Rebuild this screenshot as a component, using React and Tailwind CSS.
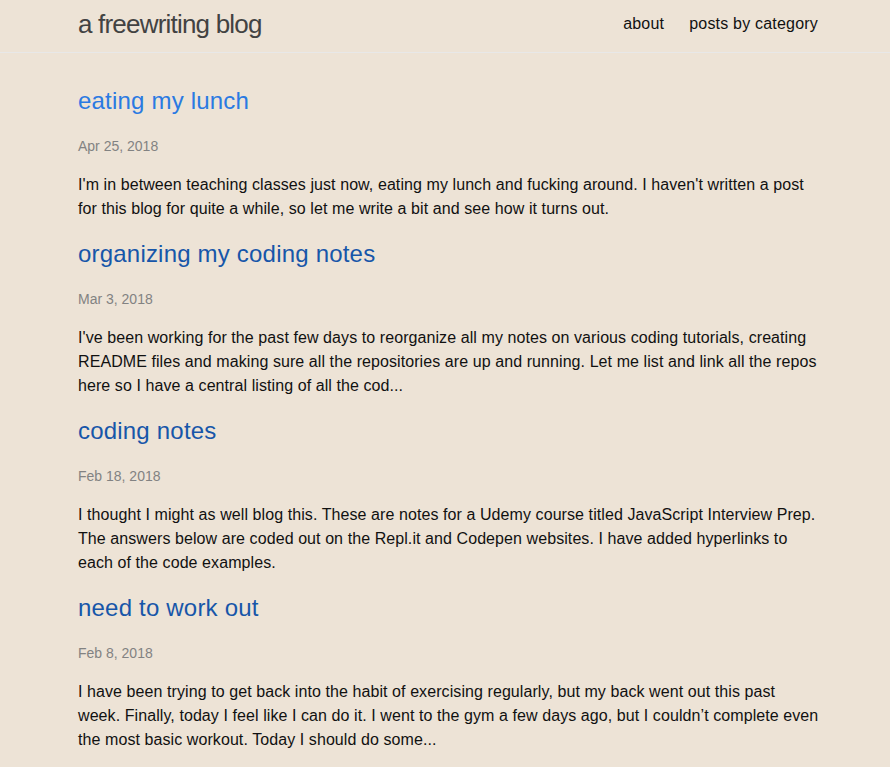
const posts = [
  {
    title: 'eating my lunch',
    date: 'Apr 25, 2018',
    lines: [
      "I'm in between teaching classes just now, eating my lunch and fucking around. I haven't written a post",
      'for this blog for quite a while, so let me write a bit and see how it turns out.',
    ],
    fresh: true,
  },
  {
    title: 'organizing my coding notes',
    date: 'Mar 3, 2018',
    lines: [
      "I've been working for the past few days to reorganize all my notes on various coding tutorials, creating",
      'README files and making sure all the repositories are up and running. Let me list and link all the repos',
      'here so I have a central listing of all the cod...',
    ],
  },
  {
    title: 'coding notes',
    date: 'Feb 18, 2018',
    lines: [
      'I thought I might as well blog this. These are notes for a Udemy course titled JavaScript Interview Prep.',
      'The answers below are coded out on the Repl.it and Codepen websites. I have added hyperlinks to',
      'each of the code examples.',
    ],
  },
  {
    title: 'need to work out',
    date: 'Feb 8, 2018',
    lines: [
      'I have been trying to get back into the habit of exercising regularly, but my back went out this past',
      'week. Finally, today I feel like I can do it. I went to the gym a few days ago, but I couldn’t complete even',
      'the most basic workout. Today I should do some...',
    ],
  },
];

export default function App() {
  return (
    <div className="min-h-screen bg-[#ede3d6] text-[#111] font-['Liberation_Sans',Arial,sans-serif]">
      <header className="border-b border-[#e8e8e8]">
        <div className="ml-[78px] w-[740px] h-[52px] flex items-start justify-between">
          <a href="#" className="text-[26px] leading-[49px] text-[#424242] tracking-[-0.8px]">
            a freewriting blog
          </a>
          <nav className="flex gap-[25px] text-[16px] leading-[48px] tracking-[0.2px]">
            <a href="#">about</a>
            <a href="#">posts by category</a>
          </nav>
        </div>
      </header>

      <main className="ml-[78px] w-[740px] pt-[33px]">
        {posts.map((p) => (
          <article key={p.title} className="mb-[18px]">
            <h2 className="text-[24px] leading-[30px] mb-[20px] tracking-[0.2px]">
              <a href="#" className={p.fresh ? 'text-[#2a7ae2]' : 'text-[#1756a9]'}>
                {p.title}
              </a>
            </h2>
            <div className="text-[14px] leading-[20px] text-[#828282] mb-[17px]">{p.date}</div>
            <p className="text-[16px] leading-[24px] tracking-[0.08px]">
              {p.lines.map((l) => (
                <span key={l} className="block whitespace-nowrap">{l}</span>
              ))}
            </p>
          </article>
        ))}
      </main>
    </div>
  );
}
